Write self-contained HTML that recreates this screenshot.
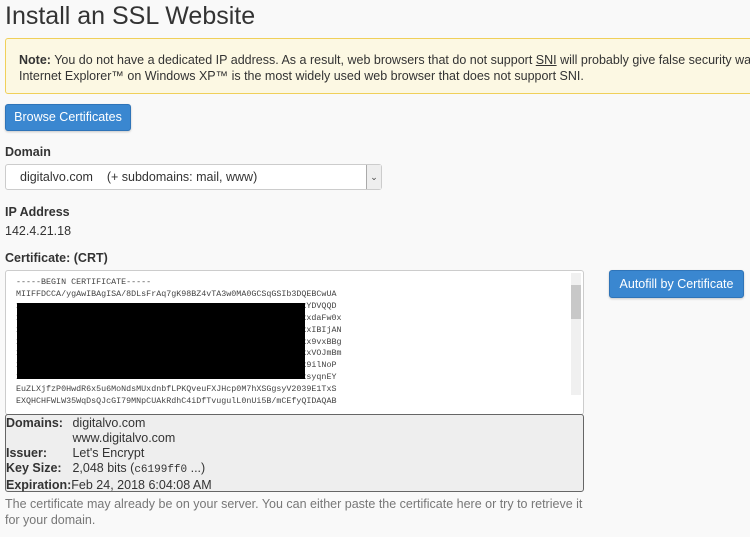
<!DOCTYPE html>
<html><head><style>
body{margin:0;background:#f9f9f9;font-family:"Liberation Sans",sans-serif;color:#333;font-size:12px;width:750px;height:537px;overflow:hidden;position:relative}
.a{position:absolute}
h1{position:absolute;left:5px;top:2px;margin:0;font-weight:normal;font-size:25px;color:#333}
.note{left:5px;top:38px;width:760px;height:56px;background:#fcf8e3;border:1px solid #f0d05a;border-radius:3px;box-sizing:border-box;padding:13px 13px;line-height:16px;font-size:12.5px;white-space:nowrap}
.btn{background:#3a87d0;color:#fff;border:1px solid #2f74b8;border-radius:3px;box-sizing:border-box;text-align:center;font-size:12.5px;box-shadow:0 1px 2px rgba(0,0,0,.2)}
.lbl{font-weight:bold;font-size:12.5px}
.sel{left:5px;top:164px;width:377px;height:26px;background:#fff;border:1px solid #ccc;border-radius:3px;box-sizing:border-box;font-size:12.5px;line-height:24px;padding-left:14px}
.arr{right:0;top:0;width:14px;height:24px;border-left:1px solid #aaa;background:#eee;text-align:center;font-size:9px;color:#444}
.ta{left:5px;top:270px;width:579px;height:145px;background:#fff;border:1px solid #ccc;border-radius:3px;box-sizing:border-box;font-family:"Liberation Mono",monospace;font-size:8.35px;color:#444;line-height:11.9px;padding:6px 10px;white-space:nowrap}
.info{left:5px;top:414px;width:579px;height:78px;background:#eee;border:1px solid #666;border-radius:3px;box-sizing:border-box;font-size:12.5px;line-height:15px;padding:1px 0}
.info b{display:inline-block;width:63px}
</style></head><body>
<h1>Install an SSL Website</h1>
<div class="a note"><b>Note:</b> You do not have a dedicated IP address. As a result, web browsers that do not support <u>SNI</u> will probably give false security warnings<br>Internet Explorer™ on Windows XP™ is the most widely used web browser that does not support SNI.</div>
<div class="a btn" style="left:5px;top:104px;width:126px;height:27px;line-height:25px">Browse Certificates</div>
<div class="a lbl" style="left:5px;top:145px">Domain</div>
<div class="a sel">digitalvo.com &nbsp;&nbsp;&nbsp;(+ subdomains: mail, www)<div class="a arr">&#8964;</div></div>
<div class="a lbl" style="left:5px;top:205px">IP Address</div>
<div class="a" style="left:5px;top:224px;font-size:12.5px">142.4.21.18</div>
<div class="a lbl" style="left:5px;top:251px">Certificate: (CRT)</div>
<div class="a ta">-----BEGIN CERTIFICATE-----<br>MIIFFDCCA/ygAwIBAgISA/8DLsFrAq7gK98BZ4vTA3w0MA0GCSqGSIb3DQEBCwUA<br>xxxxxxxxxxxxxxxxxxxxxxxxxxxxxxxxxxxxxxxxxxxxxxxxxxxxxxxxxxYDVQQD<br>xxxxxxxxxxxxxxxxxxxxxxxxxxxxxxxxxxxxxxxxxxxxxxxxxxxxxxxxxxxdaFw0x<br>xxxxxxxxxxxxxxxxxxxxxxxxxxxxxxxxxxxxxxxxxxxxxxxxxxxxxxxxxxxIBIjAN<br>xxxxxxxxxxxxxxxxxxxxxxxxxxxxxxxxxxxxxxxxxxxxxxxxxxxxxxxxxxx9vxBBg<br>xxxxxxxxxxxxxxxxxxxxxxxxxxxxxxxxxxxxxxxxxxxxxxxxxxxxxxxxxxxVOJmBm<br>xxxxxxxxxxxxxxxxxxxxxxxxxxxxxxxxxxxxxxxxxxxxxxxxxxxxxxxxxx9ilNoP<br>xxxxxxxxxxxxxxxxxxxxxxxxxxxxxxxxxxxxxxxxxxxxxxxxxxxxxxxxxxsyqnEY<br>EuZLXjfzP0HwdR6x5u6MoNdsMUxdnbfLPKQveuFXJHcp0M7hXSGgsyV2039E1TxS<br>EXQHCHFWLW35WqDsQJcGI79MNpCUAkRdhC4iDfTvugulL0nUi5B/mCEfyQIDAQAB
<div class="a" style="right:2px;top:2px;width:10px;height:122px;background:#f0f0f0"><div class="a" style="left:0;top:12px;width:10px;height:34px;background:#c8c8c8"></div></div>
</div>
<div class="a" style="left:17px;top:303px;width:288px;height:76px;background:#000"></div>
<div class="a info"><b>Domains:</b> digitalvo.com<br><b></b> www.digitalvo.com<br><b>Issuer:</b> Let's Encrypt<br><b>Key Size:</b> 2,048 bits (<span style="font-family:'Liberation Mono',monospace;font-size:11px">c6199ff0</span> ...)<br><b style="width:auto">Expiration:</b>Feb 24, 2018 6:04:08 AM</div>
<div class="a btn" style="left:609px;top:270px;width:135px;height:28px;line-height:26px">Autofill by Certificate</div>
<div class="a" style="left:5px;top:496px;width:580px;font-size:12.5px;line-height:16px;color:#777">The certificate may already be on your server. You can either paste the certificate here or try to retrieve it for your domain.</div>
</body></html>
